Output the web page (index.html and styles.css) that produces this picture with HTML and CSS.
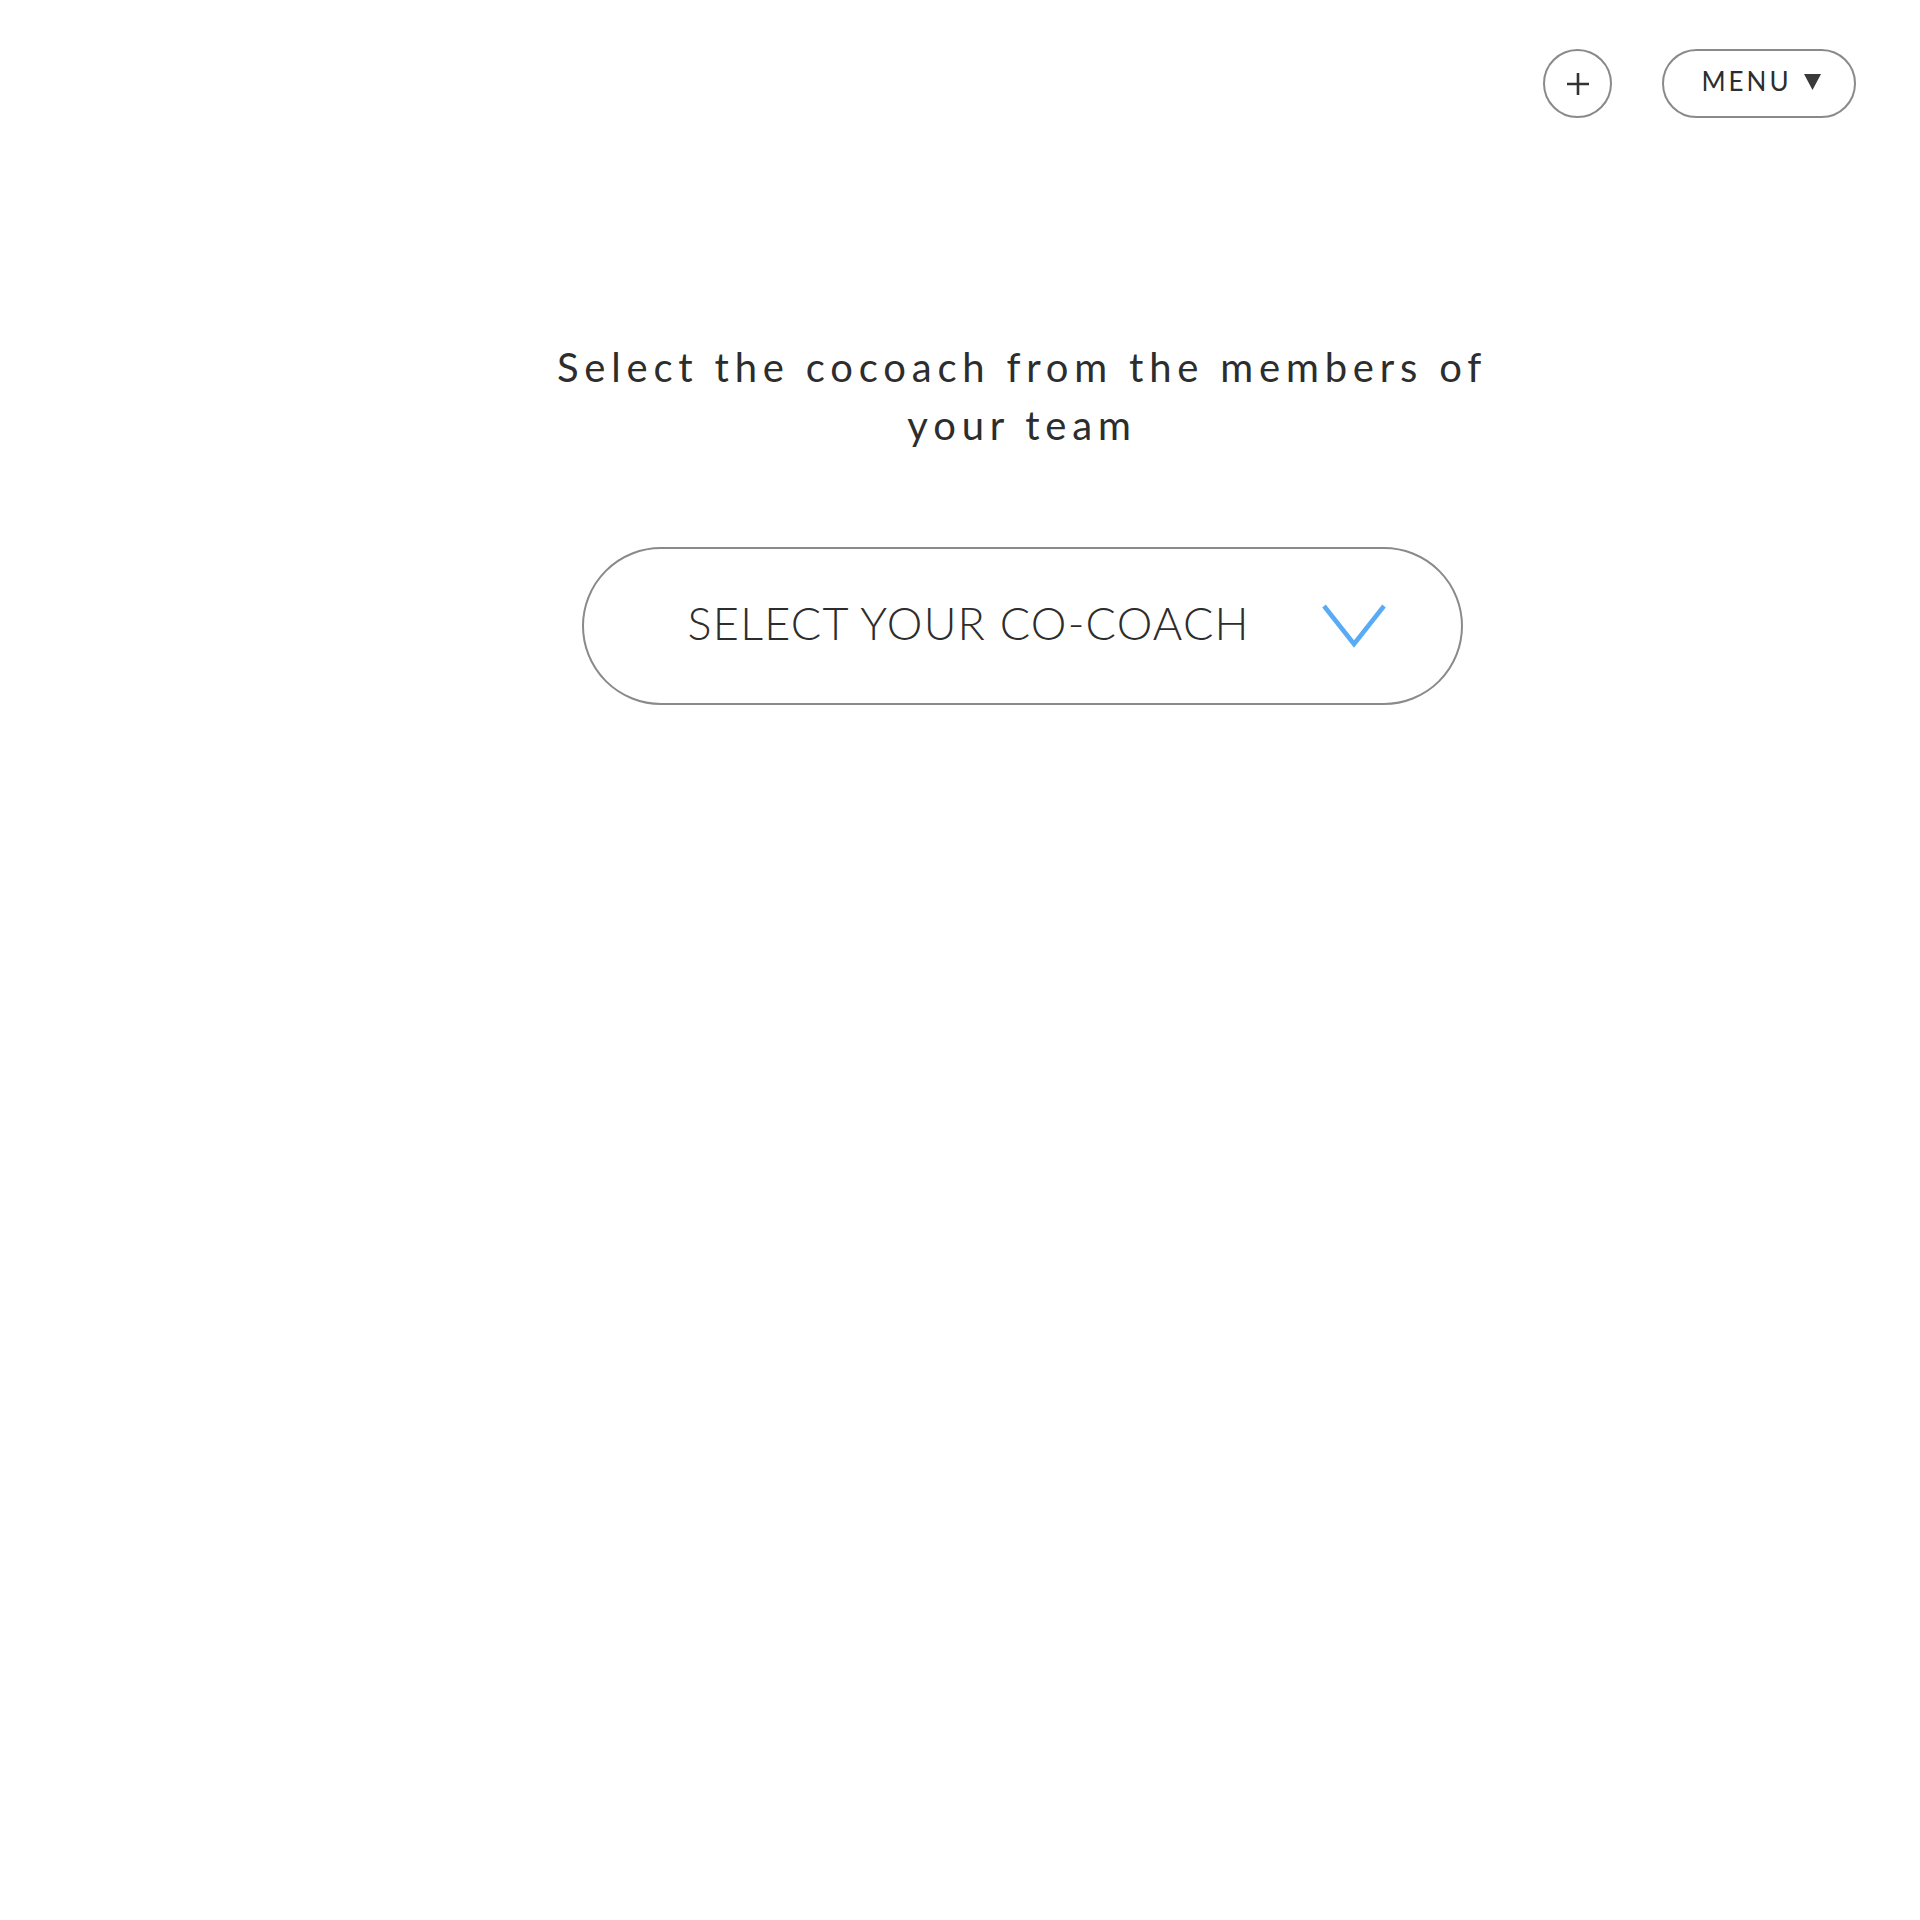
FILE: index.html
```html
<!DOCTYPE html>
<html lang="en">
<head>
<meta charset="utf-8">
<title>Select co-coach</title>
<link rel="stylesheet" href="styles.css">
</head>
<body>
<header class="topbar">
  <button class="icon-btn" aria-label="Add">
    <svg width="24" height="24" viewBox="0 0 24 24"><path d="M12 1v22M1 12h22" stroke="#333" stroke-width="2.6" fill="none"/></svg>
  </button>
  <button class="menu-btn">MENU <svg class="caret" width="17" height="16" viewBox="0 0 17 16"><path d="M0 0 H17 L8.5 16 Z" fill="#3a3a3a"/></svg></button>
</header>
<main class="content">
  <h1 class="title">Select the cocoach from the members of your team</h1>
  <button class="select">
    <span class="select-label">SELECT YOUR CO-COACH</span>
    <svg class="chev" width="64" height="44" viewBox="0 0 64 44"><path d="M2 2 L32 40 L62 2" stroke="#5aabf5" stroke-width="4.5" fill="none"/></svg>
  </button>
</main>
</body>
</html>
```
FILE: styles.css
```css
html, body { margin: 0; padding: 0; background: #fff; }
body { font-family: "Lato", "Liberation Sans", sans-serif; color: #2d2d2d; }
.topbar {
  display: flex;
  justify-content: flex-end;
  align-items: center;
  gap: 50px;
  padding: 49px 64px 0 0;
}
.icon-btn {
  width: 69px; height: 69px;
  border: 2px solid #8a8a8a;
  border-radius: 50%;
  background: #fff;
  display: flex; align-items: center; justify-content: center;
  padding: 0;
}
.menu-btn {
  width: 194px; height: 69px;
  border: 2px solid #8a8a8a;
  border-radius: 35px;
  background: #fff;
  font-family: "Lato", sans-serif;
  font-size: 26px;
  letter-spacing: 3px;
  color: #2d2d2d;
  display: flex; align-items: center; justify-content: center;
  gap: 12px;
  padding: 0 0 5px 4px;
}
.caret { display: block; margin-top: 2px; }
.content {
  display: flex;
  flex-direction: column;
  align-items: center;
  padding-left: 124px;
}
.title {
  margin: 220px 0 0;
  max-width: 970px;
  text-align: center;
  font-weight: 400;
  font-size: 40px;
  line-height: 58px;
  letter-spacing: 5.8px;
  color: #2d2d2d;
}
.select {
  margin-top: 93px;
  width: 881px; height: 158px;
  border: 2px solid #8a8a8a;
  border-radius: 80px;
  background: #fff;
  display: flex; align-items: center;
  padding: 0 0 6px 104px;
  font-family: "Lato", sans-serif;
  color: #2d2d2d;
}
.select-label { font-size: 45px; font-weight: 300; letter-spacing: 1.25px; }
.chev { margin-left: 72px; margin-top: 6px; }
```
